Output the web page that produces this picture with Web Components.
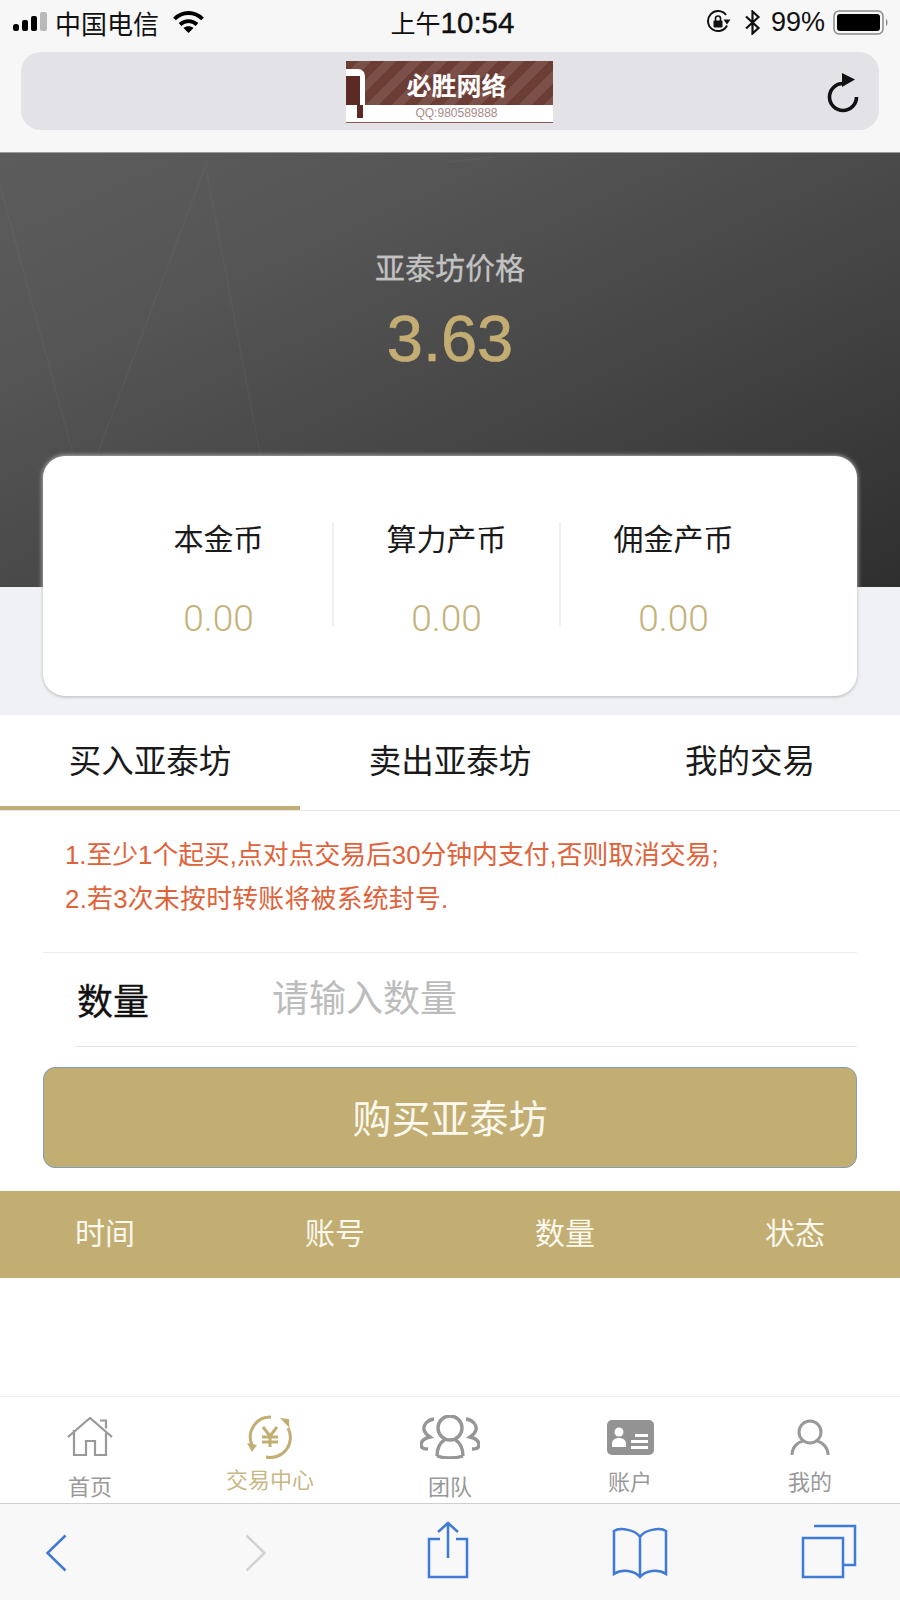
<!DOCTYPE html>
<html lang="zh">
<head>
<meta charset="utf-8">
<title>亚泰坊</title>
<style>
    html, body { margin: 0; padding: 0; }
    body {
        width: 900px;
        height: 1600px;
        overflow: hidden;
        display: flex;
        flex-direction: column;
        background: #fff;
        font-family: "Liberation Sans", "Noto Sans CJK SC", sans-serif;
    }
    .spacer { flex: 1; }
</style>
</head>
<body>
<status-bar></status-bar>
<url-bar></url-bar>
<price-hero label="亚泰坊价格" price="3.63"></price-hero>
<balance-card></balance-card>
<trade-tabs></trade-tabs>
<trade-notice>
    <div>1.至少1个起买,点对点交易后30分钟内支付,否则取消交易;</div>
    <div style="letter-spacing:.3px">2.若3次未按时转账将被系统封号.</div>
</trade-notice>
<trade-form></trade-form>
<record-head></record-head>
<div class="spacer"></div>
<app-tabs></app-tabs>
<browser-toolbar></browser-toolbar>

<script>
class StatusBar extends HTMLElement {
    connectedCallback() {
        const shadow = this.attachShadow({ mode: "open" })
        shadow.innerHTML = /* html */ `
            <style>
                :host {
                    display: flex;
                    align-items: center;
                    height: 52px;
                    padding: 0 11px 8px 13px;
                    box-sizing: border-box;
                    background: #f7f7f7;
                    color: #111;
                    font-size: 26px;
                }
                .left, .right { flex: 1; display: flex; align-items: center; }
                .right { justify-content: flex-end; }
                .carrier { margin-left: 7px; font-size: 26px; }
                .wifi { margin-left: 14px; }
                .time { display: flex; align-items: baseline; font-size: 25px; margin-left: 3px; }
                .clock { font-size: 29.500px; -webkit-text-stroke: .4px #111; }
                .pct { margin: 0 8px 0 10px; font-size: 27px; }
                .bt { margin-left: 13px; }
            </style>
            <div class="left">
                <svg width="35" height="20" viewBox="0 0 35 20">
                    <rect x="0" y="12" width="6" height="7" rx="2.500" fill="#000"/>
                    <rect x="9" y="8" width="6" height="11" rx="2" fill="#000"/>
                    <rect x="18" y="4" width="6" height="15" rx="2" fill="#000"/>
                    <rect x="27" y="0" width="7" height="19" rx="2" fill="#b9b9b9"/>
                </svg>
                <span class="carrier">中国电信</span>
                <svg class="wifi" width="31" height="22" viewBox="0 0 31 22">
                    <path d="M1.500 8C9.500 0 21.500 0 29.500 8" fill="none" stroke="#000" stroke-width="3.800"/>
                    <path d="M7 13.500c5-4.600 12-4.600 17 0" fill="none" stroke="#000" stroke-width="3.800"/>
                    <path d="M10.500 17c2.800-2.300 7.200-2.300 10 0l-5 5z" fill="#000"/>
                </svg>
            </div>
            <span class="time"><span>上午</span><span class="clock">10:54</span></span>
            <div class="right">
                <svg width="25" height="24" viewBox="0 0 25 24">
                    <path d="M21 15.500A10 10 0 1 1 20 5" fill="none" stroke="#111" stroke-width="2"/>
                    <path d="M17.500 9.500h7l-3.500 5z" fill="#111"/>
                    <rect x="7.500" y="10.500" width="9" height="7" rx="1" fill="#111"/>
                    <path d="M9.500 11V8.500a2.500 2.500 0 0 1 5 0V11" fill="none" stroke="#111" stroke-width="1.600"/>
                </svg>
                <svg class="bt" width="17" height="25" viewBox="0 0 17 25">
                    <path d="M2 6.500L14.500 18 8.500 23.500V1.500L14.500 7 2 18.500" fill="none" stroke="#111" stroke-width="2.200"/>
                </svg>
                <span class="pct">99%</span>
                <svg width="56" height="25" viewBox="0 0 56 25">
                    <rect x="1" y="1" width="49" height="23" rx="5" fill="none" stroke="#8a8a8a" stroke-width="1.500"/>
                    <rect x="4" y="4" width="43" height="17" rx="3" fill="#000"/>
                    <path d="M53 9c2 .5 2 6.500 0 7z" fill="#8a8a8a"/>
                </svg>
            </div>
        `
    }
}

class UrlBar extends HTMLElement {
    connectedCallback() {
        const shadow = this.attachShadow({ mode: "open" })
        shadow.innerHTML = /* html */ `
            <style>
                :host {
                    display: block;
                    padding: 0 21px 22px 21px;
                    background: #f7f7f7;
                }
                .bar {
                    position: relative;
                    height: 78px;
                    border-radius: 20px;
                    background: #e2e2e7;
                    display: flex;
                    align-items: flex-start;
                    justify-content: center;
                }
                .logo {
                    width: 207px;
                    height: 62px;
                    margin-top: 9px;
                    margin-right: 1px;
                    display: flex;
                    flex-direction: column;
                    background: #fff;
                    overflow: hidden;
                    position: relative;
                    font-family: "Noto Sans CJK SC", sans-serif;
                }
                .top {
                    height: 44px;
                    flex: none;
                    box-sizing: border-box;
                    background: repeating-linear-gradient(135deg, #6c3d35 0 9px, #7b5048 9px 18px);
                    color: #fff;
                    font-size: 25px;
                    font-weight: 700;
                    line-height: 47px;
                    text-align: center;
                    padding-left: 14px;
                }
                .qq {
                    flex: 1;
                    color: #a58b88;
                    font-family: "Liberation Sans", sans-serif;
                    font-size: 12px;
                    line-height: 17px;
                    text-align: center;
                    padding-left: 14px;
                    border-bottom: 2px solid #8b5a50;
                }
                .mark { position: absolute; left: 0; top: 0; }
                .reload { position: absolute; right: 19px; top: 20px; }
            </style>
            <div class="bar">
                <div class="logo">
                    <div class="top">必胜网络</div>
                    <div class="qq">QQ:980589888</div>
                    <svg class="mark" width="24" height="60" viewBox="0 0 24 60">
                        <path d="M0 8H12a7 7 0 0 1 7 7V44H14V15H0z" fill="#fff"/>
                        <rect x="0" y="15" width="14" height="29" fill="#5b2a24"/>
                        <rect x="11" y="44" width="6" height="13" fill="#5b2a24"/>
                    </svg>
                </div>
                <svg class="reload" width="33" height="42" viewBox="0 0 33 42">
                    <path d="M16 11.500A13.500 13.500 0 1 0 29.500 25" fill="none" stroke="#111" stroke-width="3.600"/>
                    <path d="M15 1l13 6.500-13 7.500z" fill="#111"/>
                </svg>
            </div>
        `
    }
}

class PriceHero extends HTMLElement {
    connectedCallback() {
        const shadow = this.attachShadow({ mode: "open" })
        shadow.innerHTML = /* html */ `
            <style>
                :host {
                    display: block;
                    position: relative;
                    height: 435px;
                    box-sizing: border-box;
                    padding-top: 98px;
                    overflow: hidden;
                    border-top: 1px solid #9a9a9a;
                    background: linear-gradient(155deg, #5c5c5c 0%, #565656 25%, #444 62%, #2f2f2f 100%);
                    text-align: center;
                }
                svg { position: absolute; left: 0; top: 0; }
                .label {
                    position: relative;
                    color: #c2c2c2;
                    font-size: 30px;
                    line-height: 36px;
                    -webkit-text-stroke: .3px #c2c2c2;
                }
                .price {
                    position: relative;
                    margin-top: 16px;
                    color: #c4ad72;
                    font-size: 65px;
                    line-height: 72px;
                    -webkit-text-stroke: .7px #c4ad72;
                }
            </style>
            <svg width="900" height="435" viewBox="0 0 900 435" fill="none" stroke="#fff" stroke-opacity=".035" stroke-width="1.500">
                <path d="M0 32L120 474M207 9L0 560M207 21L293 474M80 342L120 474M447 9L494 4"/>
            </svg>
            <div class="label">${this.getAttribute("label")}</div>
            <div class="price">${this.getAttribute("price")}</div>
        `
    }
}

class BalanceCard extends HTMLElement {
    connectedCallback() {
        const shadow = this.attachShadow({ mode: "open" })
        const items = ["本金币", "算力产币", "佣金产币"]
        shadow.innerHTML = /* html */ `
            <style>
                :host {
                    display: block;
                    position: relative;
                    padding: 0 43px 19px;
                    background: #eff1f5;
                }
                .card {
                    height: 240px;
                    margin-top: -131px;
                    box-sizing: border-box;
                    padding: 66px 71px 0 62px;
                    border-radius: 22px;
                    background: #fff;
                    box-shadow: 0 0 5px rgba(235,235,235,.9), 0 1px 3px rgba(0,0,0,.35);
                    display: grid;
                    grid-template-columns: repeat(3, 1fr);
                    align-items: start;
                }
                .cell {
                    height: 104px;
                    text-align: center;
                    border-left: 2px solid #f0f0f0;
                }
                .cell:first-child { border-left: 0; }
                .name {
                    color: #1a1a1a;
                    font-size: 30px;
                    line-height: 36px;
                }
                .value {
                    margin-top: 39px;
                    color: #c4b27a;
                    font-family: Roboto, "Liberation Sans", sans-serif;
                    font-weight: 300;
                    font-size: 37px;
                    line-height: 44px;
                }
            </style>
            <div class="card">
                ${items.map(n => `<div class="cell"><div class="name">${n}</div><div class="value">0.00</div></div>`).join("")}
            </div>
        `
    }
}

class TradeTabs extends HTMLElement {
    connectedCallback() {
        const shadow = this.attachShadow({ mode: "open" })
        const tabs = ["买入亚泰坊", "卖出亚泰坊", "我的交易"]
        shadow.innerHTML = /* html */ `
            <style>
                :host {
                    display: grid;
                    grid-template-columns: repeat(3, 1fr);
                    height: 96px;
                    box-sizing: border-box;
                    border-bottom: 1px solid #e6e6e6;
                    background: #fff;
                }
                .tab {
                    color: #1a1a1a;
                    font-size: 32.500px;
                    line-height: 94px;
                    height: 95px;
                    box-sizing: border-box;
                    text-align: center;
                }
                .tab.on { border-bottom: 4px solid #c2ad72; }
            </style>
            ${tabs.map((t, i) => `<div class="tab ${i === 0 ? "on" : ""}">${t}</div>`).join("")}
        `
    }
}

class TradeNotice extends HTMLElement {
    connectedCallback() {
        const shadow = this.attachShadow({ mode: "open" })
        shadow.innerHTML = /* html */ `
            <style>
                :host {
                    display: block;
                    padding: 22px 0 31px 65px;
                    color: #e0623a;
                    font-size: 25.800px;
                    line-height: 44px;
                }
            </style>
            <slot></slot>
        `
    }
}

class TradeForm extends HTMLElement {
    connectedCallback() {
        const shadow = this.attachShadow({ mode: "open" })
        shadow.innerHTML = /* html */ `
            <style>
                :host {
                    display: block;
                    padding: 0 43px 23px;
                }
                .row {
                    display: flex;
                    align-items: center;
                    height: 93px;
                    border-top: 1px solid #ececec;
                    padding-left: 34px;
                }
                .rule {
                    height: 1px;
                    margin-left: 32px;
                    background: #e6e6e6;
                }
                .name {
                    width: 195px;
                    color: #111;
                    font-size: 36px;
                    line-height: 44px;
                    padding-top: 6px;
                    -webkit-text-stroke: .3px #111;
                }
                input {
                    flex: 1;
                    min-width: 0;
                    border: 0;
                    outline: 0;
                    padding: 0;
                    background: transparent;
                    font: 37px "Liberation Sans", "Noto Sans CJK SC", sans-serif;
                }
                input::placeholder { color: #bcbcbc; opacity: 1; }
                button {
                    display: block;
                    width: 100%;
                    height: 101px;
                    margin-top: 20px;
                    padding: 0 0 4px;
                    border: 1px solid #7d9db5;
                    border-radius: 12px;
                    background: #c2ad72;
                    color: #fbf8ee;
                    font: 39px "Liberation Sans", "Noto Sans CJK SC", sans-serif;
                }
            </style>
            <div class="row">
                <div class="name">数量</div>
                <input placeholder="请输入数量">
            </div>
            <div class="rule"></div>
            <button>购买亚泰坊</button>
        `
    }
}

class RecordHead extends HTMLElement {
    connectedCallback() {
        const shadow = this.attachShadow({ mode: "open" })
        const cols = ["时间", "账号", "数量", "状态"]
        shadow.innerHTML = /* html */ `
            <style>
                :host {
                    display: grid;
                    grid-template-columns: repeat(4, 230px);
                    justify-content: center;
                    height: 87px;
                    background: #c2ad72;
                    color: #fbf8ee;
                    font-size: 30px;
                    line-height: 86px;
                    text-align: center;
                }
            </style>
            ${cols.map(c => `<div>${c}</div>`).join("")}
        `
    }
}

class TabItem extends HTMLElement {
    connectedCallback() {
        const shadow = this.attachShadow({ mode: "open" })
        const gap = this.getAttribute("gap") || 0
        shadow.innerHTML = /* html */ `
            <style>
                :host {
                    display: flex;
                    flex-direction: column;
                    align-items: center;
                    color: #999;
                    font-size: 22px;
                    line-height: 26px;
                }
                :host([active]) { color: #c9b784; }
                .icon { height: 46px; display: flex; align-items: center; }
                .text { margin-top: ${gap}px; }
            </style>
            <div class="icon"><slot name="icon"></slot></div>
            <div class="text"><slot></slot></div>
        `
    }
}

class AppTabs extends HTMLElement {
    connectedCallback() {
        const shadow = this.attachShadow({ mode: "open" })
        shadow.innerHTML = /* html */ `
            <style>
                :host {
                    display: grid;
                    grid-template-columns: repeat(5, 1fr);
                    height: 107px;
                    box-sizing: border-box;
                    padding-top: 17px;
                    border-top: 1px solid #ececec;
                    background: #fff;
                }
            </style>
            <tab-item gap="15">
                <svg slot="icon" width="46" height="40" viewBox="0 0 46 40" fill="none" stroke="#999" stroke-width="2.200">
                    <path d="M1 20L23 1 45 20"/>
                    <path d="M33 3.500h6v8"/>
                    <path d="M7 13V38H19V24H28V38H39V16"/>
                </svg>
                首页
            </tab-item>
            <tab-item gap="8" active>
                <svg slot="icon" width="46" height="44" viewBox="0 0 46 44" fill="none" stroke="#c2ad72" stroke-width="3">
                    <path d="M24 2A20 20 0 0 0 5 30"/>
                    <path d="M0 28l10 2-5 7z" fill="#c2ad72" stroke="none"/>
                    <path d="M19 42A20 20 0 0 0 41 13"/>
                    <path d="M33 3l9 1 .500 9z" fill="#c2ad72" stroke="none"/>
                    <path d="M16 12L23 21 30 12M15 22H31M15 27H31M23 21V32"/>
                </svg>
                交易中心
            </tab-item>
            <tab-item gap="15">
                <svg slot="icon" width="60" height="44" viewBox="0 0 60 44" fill="none" stroke="#969696" stroke-width="3.400">
                    <circle cx="30" cy="13" r="12"/>
                    <path d="M17 41C17 31 21 27 25 24.500M43 41C43 31 39 27 35 24.500M17 41Q30 45 43 41"/>
                    <path d="M14 4C7 5 3 10 4 15c1 3 3 5 6 7-4 1-9 3-9 8 0 2 2 4 7 4"/>
                    <path d="M46 4C53 5 57 10 56 15c-1 3-3 5-6 7 4 1 9 3 9 8 0 2-2 4-7 4"/>
                </svg>
                团队
            </tab-item>
            <tab-item gap="10">
                <svg slot="icon" width="47" height="35" viewBox="0 0 47 35">
                    <rect width="47" height="35" rx="5" fill="#939393"/>
                    <circle cx="12" cy="12" r="4.500" fill="#fff"/>
                    <path d="M5 27v-3c0-4 3-6 7-6s7 2 7 6v3z" fill="#fff"/>
                    <path d="M28 14h13v3H28zM24 20h17v3H24zM24 26h17v3H24z" fill="#fff"/>
                </svg>
                账户
            </tab-item>
            <tab-item gap="10">
                <svg slot="icon" width="40" height="37" viewBox="0 0 40 37" fill="none" stroke="#999" stroke-width="3">
                    <circle cx="20" cy="13" r="11"/>
                    <path d="M2 36c0-8 6-13 11-14M38 36c0-8-6-13-11-14"/>
                </svg>
                我的
            </tab-item>
        `
    }
}

class BrowserToolbar extends HTMLElement {
    connectedCallback() {
        const shadow = this.attachShadow({ mode: "open" })
        shadow.innerHTML = /* html */ `
            <style>
                :host {
                    display: flex;
                    align-items: flex-start;
                    height: 97px;
                    box-sizing: border-box;
                    border-top: 1px solid #cfcfcf;
                    background: #f8f8f8;
                }
                svg { display: block; flex: none; }
                g { fill: none; stroke: #3f7ad6; stroke-width: 2.500; }
            </style>
            <svg style="margin:30px 0 0 45px" width="22" height="38" viewBox="0 0 22 38">
                <g stroke-width="3"><path d="M20.500 1.500L2.500 19l18 17.500"/></g>
            </svg>
            <svg style="margin:30px 0 0 178px" width="22" height="38" viewBox="0 0 22 38">
                <g style="stroke:#d2d2d2" stroke-width="3"><path d="M1.500 1.500L19.500 19l-18 17.500"/></g>
            </svg>
            <svg style="margin:17px 0 0 159px" width="44" height="58" viewBox="0 0 44 58">
                <g><path d="M14 18H3V56H41V18H30M22 37V2M12 11L22 2l10 9"/></g>
            </svg>
            <svg style="margin:23px 0 0 142px" width="56" height="52" viewBox="0 0 56 52">
                <g><path d="M28 10C24 3 8 0 2 4V47C10 42 22 43 28 50 34 43 46 42 54 47V4C48 0 32 3 28 10zM28 10V50"/></g>
            </svg>
            <svg style="margin:20px 0 0 133px" width="56" height="55" viewBox="0 0 56 55">
                <g><path d="M13 2H54V41H42"/><path d="M2 14H42V53H2z"/></g>
            </svg>
        `
    }
}

customElements.define("status-bar", StatusBar)
customElements.define("url-bar", UrlBar)
customElements.define("price-hero", PriceHero)
customElements.define("balance-card", BalanceCard)
customElements.define("trade-tabs", TradeTabs)
customElements.define("trade-notice", TradeNotice)
customElements.define("trade-form", TradeForm)
customElements.define("record-head", RecordHead)
customElements.define("tab-item", TabItem)
customElements.define("app-tabs", AppTabs)
customElements.define("browser-toolbar", BrowserToolbar)
</script>
</body>
</html>
